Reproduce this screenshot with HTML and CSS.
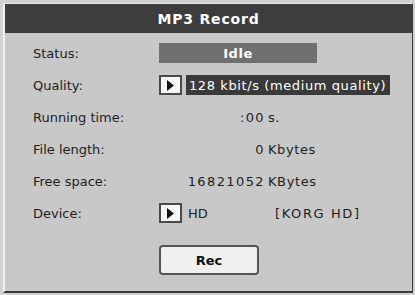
FILE: index.html
```html
<!DOCTYPE html>
<html lang="en">
<head>
    <meta charset="UTF-8">
    <title>MP3 Record</title>
    <link rel="stylesheet" href="styles.css">
</head>
<body>
    <div class="ventana">
        <div class="titulo">MP3 Record</div>

        <div class="contenido">
            <div class="fila">
                <span class="etiqueta">Status:</span>
                <div class="estado">Idle</div>
            </div>

            <div class="fila">
                <span class="etiqueta">Quality:</span>
                <div class="selector">
                    <div class="flecha">
                        <svg width="7" height="11" viewBox="0 0 7 11"><polygon points="0,0 7,5.5 0,11" fill="#111"/></svg>
                    </div>
                    <div class="campo-oscuro">128 kbit/s (medium quality)</div>
                </div>
            </div>

            <div class="fila">
                <span class="etiqueta">Running time:</span>
                <div class="valor"><span class="numero">:00</span><span class="unidad">s.</span></div>
            </div>

            <div class="fila">
                <span class="etiqueta">File length:</span>
                <div class="valor"><span class="numero">0</span><span class="unidad">Kbytes</span></div>
            </div>

            <div class="fila">
                <span class="etiqueta">Free space:</span>
                <div class="valor"><span class="numero">16821052</span><span class="unidad">KBytes</span></div>
            </div>

            <div class="fila">
                <span class="etiqueta">Device:</span>
                <div class="selector">
                    <div class="flecha">
                        <svg width="7" height="11" viewBox="0 0 7 11"><polygon points="0,0 7,5.5 0,11" fill="#111"/></svg>
                    </div>
                    <span class="disco">HD</span>
                    <span class="nombre-disco">[KORG HD]</span>
                </div>
            </div>

            <div class="botonera">
                <button class="boton-rec">Rec</button>
            </div>
        </div>
    </div>
</body>
</html>
```

FILE: styles.css
```css
body {
    margin: 0;
    background: #d2d2d2;
    font-family: 'DejaVu Sans', sans-serif;
    font-size: 13px;
    color: #1e1e1e;
}

.ventana {
    margin: 3px 0 0 3px;
    width: 407px;
    height: 287px;
    background: #c8c8c8;
    border-top: 1px solid #e8e8e8;
    border-left: 2px solid #f2f2f2;
    border-right: 1px solid #3a3a3a;
    border-bottom: 2px solid #3a3a3a;
    display: flex;
    flex-direction: column;
}

.titulo {
    height: 29px;
    background: #3d3d3d;
    color: #fff;
    font-weight: bold;
    font-size: 14px;
    letter-spacing: 0.8px;
    display: flex;
    align-items: center;
    justify-content: center;
}

.contenido {
    padding: 4px 0 0 28px;
}

.fila {
    height: 32px;
    display: flex;
    align-items: center;
}

.etiqueta {
    width: 126px;
}

.estado {
    width: 158px;
    height: 20px;
    background: #6f6f6f;
    color: #fff;
    font-weight: bold;
    letter-spacing: 0.5px;
    display: flex;
    align-items: center;
    justify-content: center;
}

.selector {
    display: flex;
    align-items: center;
}

.flecha {
    width: 19px;
    height: 16px;
    border: 2px solid #4a4a4a;
    background: #f7f7f7;
    display: flex;
    align-items: center;
    justify-content: center;
}

.campo-oscuro {
    margin-left: 4px;
    width: 201px;
    height: 20px;
    padding-left: 3px;
    background: #3a3a3a;
    color: #fff;
    letter-spacing: 0.6px;
    white-space: nowrap;
    overflow: hidden;
    display: flex;
    align-items: center;
}

.valor {
    display: flex;
}

.numero {
    width: 106px;
    text-align: right;
    letter-spacing: 1.4px;
}

.unidad {
    margin-left: 3px;
    letter-spacing: 0.6px;
}

.disco {
    margin-left: 6px;
    width: 87px;
}

.nombre-disco {
    letter-spacing: 1.6px;
}

.botonera {
    padding: 16px 0 0 126px;
}

.boton-rec {
    width: 100px;
    height: 30px;
    background: #f0f0f0;
    border: 2px solid #555;
    border-radius: 4px;
    font-family: 'DejaVu Sans', sans-serif;
    font-weight: bold;
    font-size: 13px;
    color: #111;
}
```
